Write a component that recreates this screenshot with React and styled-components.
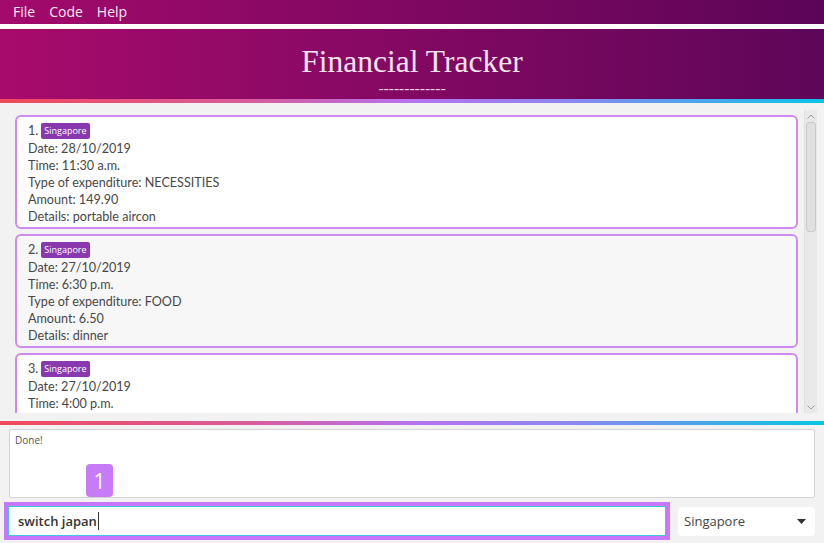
import React from 'react';
import styled, { createGlobalStyle } from 'styled-components';

const GlobalStyle = createGlobalStyle`
  html, body {
    margin: 0;
    padding: 0;
    width: 824px;
    height: 543px;
    overflow: hidden;
    background: #ffffff;
  }
  * {
    box-sizing: border-box;
  }
`;

const uiFont = `'Open Sans', 'Noto Sans', sans-serif`;

const Page = styled.div`
  width: 824px;
  height: 543px;
  display: flex;
  flex-direction: column;
  background: #ffffff;
  font-family: ${uiFont};
`;

const MenuBar = styled.div`
  height: 24px;
  display: flex;
  align-items: center;
  gap: 14px;
  padding-left: 13px;
  background: linear-gradient(to right, #a30a6b, #5c0558);
  margin-bottom: 5px;
`;

const MenuItem = styled.span`
  color: #f6eaf3;
  font-size: 14px;
  line-height: 24px;
`;

const Header = styled.div`
  height: 70px;
  display: flex;
  flex-direction: column;
  align-items: center;
  background: linear-gradient(to right, #a80b6c, #5e0659);
  padding-top: 17px;
`;

const Title = styled.div`
  font-family: 'Liberation Serif', serif;
  font-size: 31.5px;
  line-height: 32px;
  color: #f3e3ef;
`;

const Underline = styled.div`
  margin-top: 5px;
  font-family: 'Liberation Serif', serif;
  font-size: 15.5px;
  line-height: 10px;
  color: #f0d8e8;
`;

const GradientRule = styled.div`
  height: 4px;
  flex-shrink: 0;
  background: linear-gradient(
    to right,
    #f04a5c 0%,
    #d85c9a 30%,
    #b672ee 50%,
    #8a88f0 70%,
    #08c4e4 100%
  );
`;

const ListPanel = styled.div`
  height: 318px;
  background: #f2f2f2;
  padding: 7px 7px 8px 9px;
`;

const Viewport = styled.div`
  height: 303px;
  display: flex;
`;

const CardColumn = styled.div`
  flex: 1;
  overflow: hidden;
  display: flex;
  flex-direction: column;
  gap: 5px;
  padding: 5px 6px 0 6px;
`;

const Card = styled.div`
  flex-shrink: 0;
  border: 2px solid #cf8aef;
  border-radius: 6px;
  background: ${(p) => (p.$alt ? '#f7f7f7' : '#ffffff')};
  padding: 4px 11px 2px;
  color: #474747;
  font-family: Lato, 'Open Sans', sans-serif;
  font-size: 12.6px;
`;

const CardHead = styled.div`
  height: 19px;
  display: flex;
  align-items: center;
  gap: 3px;
`;

const Tag = styled.span`
  background: #8a38b0;
  color: #ffffff;
  font-family: ${uiFont};
  font-size: 9px;
  line-height: 16px;
  padding: 0 3px;
  border-radius: 2px;
`;

const Line = styled.div`
  line-height: 17px;
  white-space: nowrap;
`;

const Scrollbar = styled.div`
  width: 13px;
  display: flex;
  flex-direction: column;
  align-items: center;
  background: #e9e9e9;
  border-left: 1px solid #e0e0e0;
`;

const ScrollArrow = styled.div`
  height: 12px;
  display: flex;
  align-items: center;
  justify-content: center;
`;

const Thumb = styled.div`
  width: 10px;
  height: 110px;
  border: 1px solid #c8c8c8;
  border-radius: 3px;
  background: #e0e0e0;
`;

const ScrollSpacer = styled.div`
  flex: 1;
`;

const ResultPanel = styled.div`
  position: relative;
  height: 75px;
  padding: 4px 9px 2px 9px;
  background: #f2f2f2;
`;

const ResultBox = styled.div`
  height: 69px;
  background: #ffffff;
  border: 1px solid #d4d4d4;
  border-radius: 2px;
  padding: 3px 5px;
  font-size: 10px;
  color: #555555;
`;

const StepBadge = styled.div`
  position: absolute;
  left: 86px;
  top: 39px;
  width: 27px;
  height: 33px;
  border-radius: 4px;
  background: #c87bf7;
  color: #ffffff;
  font-size: 21px;
  display: flex;
  align-items: center;
  justify-content: center;
`;

const CommandRow = styled.div`
  flex: 1;
  display: flex;
  align-items: center;
  gap: 8px;
  padding: 2px 9px 3px 4px;
  background: #f2f2f2;
`;

const CommandBox = styled.div`
  width: 666px;
  height: 38px;
  border: 4px solid #c876fb;
  background: #c876fb;
  display: flex;
`;

const CommandInput = styled.div`
  flex: 1;
  background: #ffffff;
  border: 1px solid #3cc8e0;
  display: flex;
  align-items: center;
  padding-left: 9px;
  font-size: 13px;
  font-weight: 600;
  color: #333333;
`;

const Caret = styled.span`
  display: inline-block;
  width: 1px;
  height: 18px;
  background: #333333;
  margin-left: 1px;
`;

const Dropdown = styled.div`
  flex: 1;
  height: 29px;
  background: #ffffff;
  border-radius: 4px;
  display: flex;
  align-items: center;
  justify-content: space-between;
  padding: 0 9px 0 6px;
  font-size: 13px;
  color: #444444;
`;

const entries = [
  { date: '28/10/2019', time: '11:30 a.m.', type: 'NECESSITIES', amount: '149.90', details: 'portable aircon' },
  { date: '27/10/2019', time: '6:30 p.m.', type: 'FOOD', amount: '6.50', details: 'dinner' },
  { date: '27/10/2019', time: '4:00 p.m.', type: 'TRANSPORT', amount: '2.00', details: 'bus' },
];

const App = () => (
  <Page>
    <GlobalStyle />
    <MenuBar>
      <MenuItem>File</MenuItem>
      <MenuItem>Code</MenuItem>
      <MenuItem>Help</MenuItem>
    </MenuBar>
    <Header>
      <Title>Financial Tracker</Title>
      <Underline>-------------</Underline>
    </Header>
    <GradientRule />
    <ListPanel>
      <Viewport>
        <CardColumn>
          {entries.map((e, i) => (
            <Card key={i} $alt={i % 2 === 1}>
              <CardHead>
                <span>{i + 1}.</span>
                <Tag>Singapore</Tag>
              </CardHead>
              <Line>Date: {e.date}</Line>
              <Line>Time: {e.time}</Line>
              <Line>Type of expenditure: {e.type}</Line>
              <Line>Amount: {e.amount}</Line>
              <Line>Details: {e.details}</Line>
            </Card>
          ))}
        </CardColumn>
        <Scrollbar>
          <ScrollArrow>
            <svg width="8" height="5" viewBox="0 0 8 5">
              <path d="M0.5 4.5 L4 1 L7.5 4.5" fill="none" stroke="#999" strokeWidth="1" />
            </svg>
          </ScrollArrow>
          <Thumb />
          <ScrollSpacer />
          <ScrollArrow>
            <svg width="8" height="5" viewBox="0 0 8 5">
              <path d="M0.5 0.5 L4 4 L7.5 0.5" fill="none" stroke="#999" strokeWidth="1" />
            </svg>
          </ScrollArrow>
        </Scrollbar>
      </Viewport>
    </ListPanel>
    <GradientRule />
    <ResultPanel>
      <ResultBox>Done!</ResultBox>
      <StepBadge>1</StepBadge>
    </ResultPanel>
    <CommandRow>
      <CommandBox>
        <CommandInput>
          switch japan
          <Caret />
        </CommandInput>
      </CommandBox>
      <Dropdown>
        Singapore
        <svg width="9" height="5" viewBox="0 0 9 5">
          <path d="M0 0 L9 0 L4.5 5 Z" fill="#333" />
        </svg>
      </Dropdown>
    </CommandRow>
  </Page>
);

export default App;
